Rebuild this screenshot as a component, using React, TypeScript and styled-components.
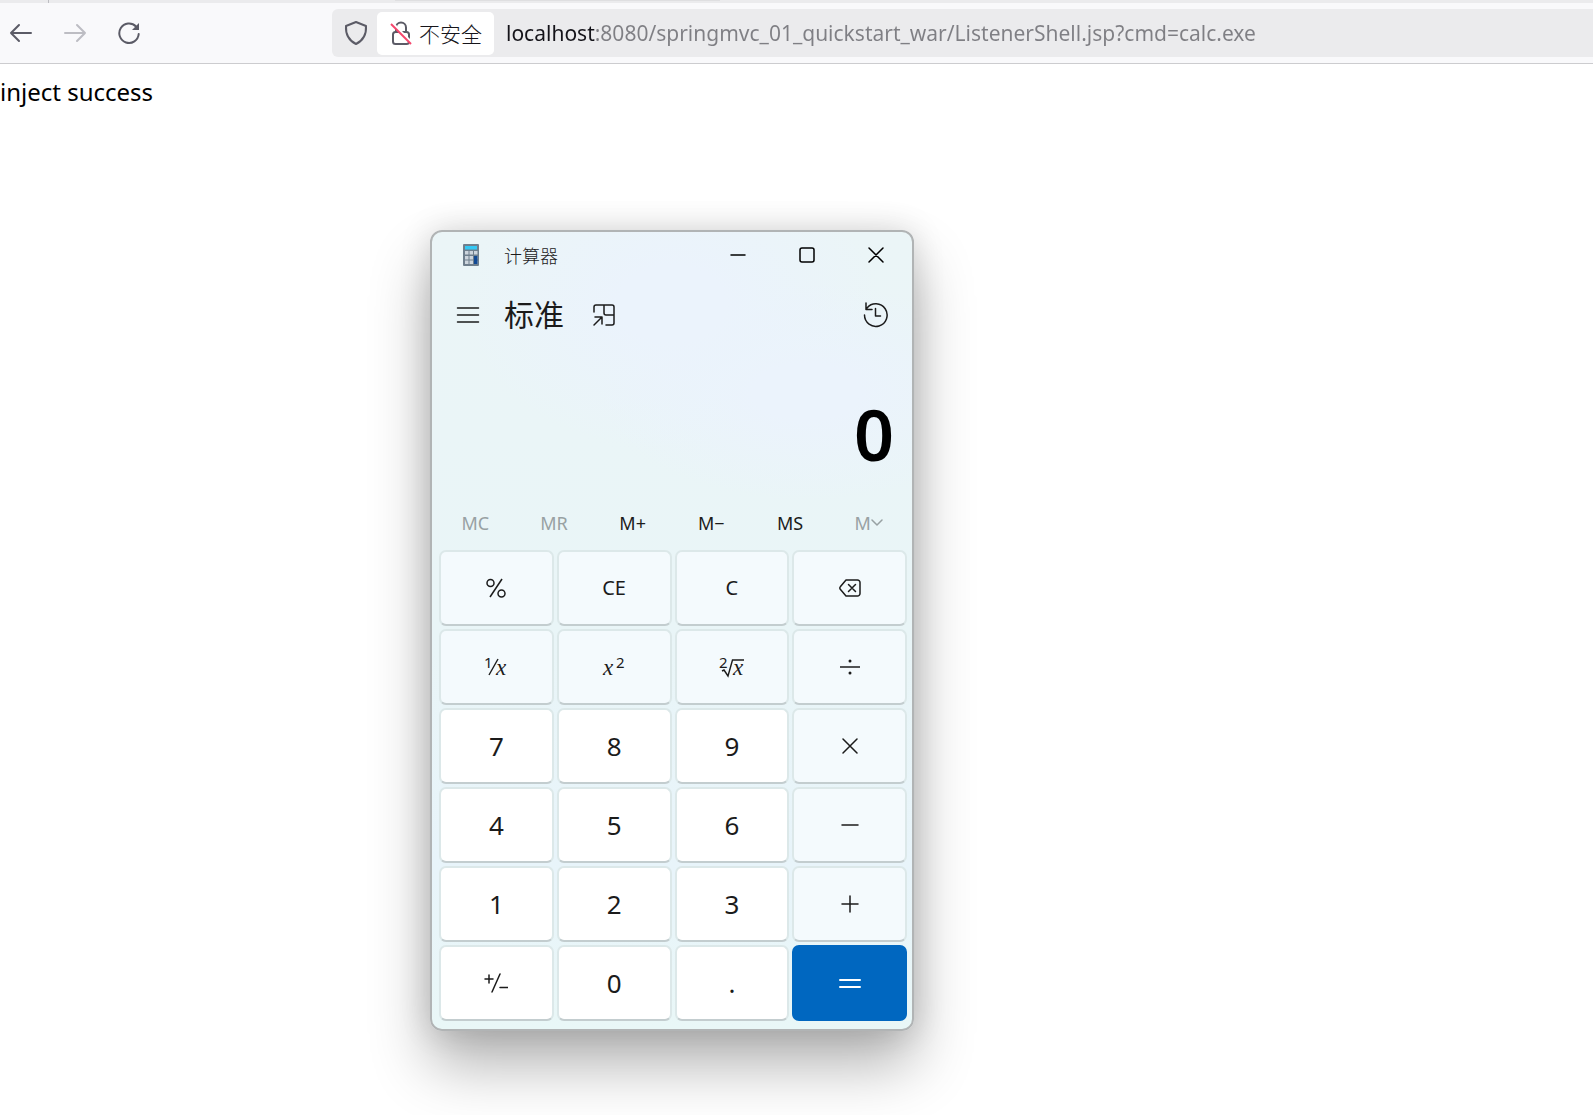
import React from "react";
import styled, { createGlobalStyle, css } from "styled-components";

const ui = `"Noto Sans", "Open Sans", "Noto Sans CJK SC", sans-serif`;
const math = `"Liberation Serif", serif`;

const GlobalStyle = createGlobalStyle`
  * { box-sizing: border-box; }
  body { margin: 0; background: #fff; color: #000; font-family: ${ui}; overflow: hidden; }
  button, input { font: inherit; color: inherit; }
  button { padding: 0; border: 0; background: transparent; cursor: default; }
`;

const Desktop = styled.div`
  position: relative;
  min-height: 100vh;
  overflow: hidden;
`;

const TabStrip = styled.div`
  display: flex;
  height: 3px;
  background: #ebebed;
`;

const TabEdge = styled.div`
  width: 49px;
  border-right: 1px solid #bdbdc2;
`;

const ActiveTabShade = styled.div`
  width: 325px;
  height: 1px;
  margin-left: 346px;
  background: #dfdfe1;
`;

const Toolbar = styled.header`
  display: flex;
  align-items: center;
  height: 61px;
  padding-left: 8px;
  background: #f9f9fb;
  border-bottom: 1px solid #cccccf;
`;

const NavGroup = styled.nav`
  display: flex;
  gap: 28px;
  width: 324px;
`;

const NavButton = styled.button`
  display: grid;
  place-items: center;
  width: 26px;
  height: 26px;
  color: #5b5b66;
  &:disabled { color: #bdbdc3; }
`;

const AddressBar = styled.div`
  display: flex;
  align-items: center;
  flex: 1;
  height: 48px;
  padding-left: 11px;
  border-radius: 6px 0 0 6px;
  background: #ebebed;
  color: #5b5b66;
`;

const Identity = styled.button`
  display: flex;
  align-items: center;
  gap: 7px;
  height: 43px;
  margin: 0 12px 0 8px;
  padding: 0 12px 0 13px;
  border-radius: 5px;
  background: #fff;
`;

const IdentityText = styled.span`
  color: #15141a;
  font-family: "Noto Sans CJK SC", sans-serif;
  font-size: 21px;
  font-weight: 300;
  line-height: 28px;
`;

const Url = styled.input`
  flex: 1;
  min-width: 0;
  height: 36px;
  padding: 0;
  border: 0;
  outline: 0;
  color: #7f7f84;
  font-family: "Noto Sans", sans-serif;
  font-size: 21px;
  background: linear-gradient(90deg, #15141a 89px, #7f7f84 89px);
  background-clip: text;
  -webkit-background-clip: text;
  -webkit-text-fill-color: transparent;
`;

const Page = styled.main`
  padding-top: 10px;
  font-size: 24px;
  line-height: 36px;
`;

const PageText = styled.p`
  margin: 0;
`;

const CalcWindow = styled.section`
  position: absolute;
  left: 430px;
  top: 230px;
  width: 484px;
  border: 2px solid #b1b4b5;
  border-radius: 12px;
  color: #1b1b1b;
  background:
    radial-gradient(ellipse 210px 150px at 50% 9%, #ebf3fc 0 25%, rgba(235, 243, 252, 0) 100%),
    radial-gradient(ellipse 210px 110px at 78% 20%, #ebf3fc 0 25%, rgba(235, 243, 252, 0) 100%),
    linear-gradient(180deg, #ebf5f7 0, #e9f5f7 50%, #e8f4fa 80%, #e9f7f7 100%);
  box-shadow: 0 34px 60px rgba(0, 0, 0, 0.3), 0 0 32px rgba(0, 0, 0, 0.14);
`;

const TitleBar = styled.div`
  display: flex;
  align-items: center;
  height: 46px;
  padding: 0 2px 0 31px;
`;

const Title = styled.h1`
  flex: 1;
  margin: 0 0 0 25px;
  font-family: "Noto Sans CJK SC", sans-serif;
  font-size: 18px;
  font-weight: 300;
  line-height: 26px;
`;

const Caption = styled.button`
  display: grid;
  place-items: center;
  width: 69px;
  height: 46px;
  color: #000;
`;

const ModeBar = styled.div`
  display: flex;
  align-items: center;
  height: 74px;
  padding: 0 23px 0 23px;
`;

const IconButton = styled.button`
  display: grid;
  place-items: center;
  width: 26px;
  height: 26px;
`;

const Mode = styled.h2`
  margin: 0 27px 0 23px;
  padding-bottom: 4px;
  font-family: "Noto Sans CJK SC", sans-serif;
  font-size: 30px;
  font-weight: 400;
  line-height: 40px;
`;

const Spacer = styled.div`
  flex: 1;
`;

const Display = styled.output`
  display: block;
  height: 146px;
  padding: 34px 18px 0 0;
  color: #000;
  font-size: 70px;
  font-weight: 600;
  line-height: 96px;
  text-align: right;
`;

const MemoryRow = styled.div`
  display: grid;
  grid-template-columns: repeat(6, 1fr);
  height: 52px;
  padding: 0 4px;
`;

const MemoryButton = styled.button`
  display: flex;
  align-items: center;
  justify-content: center;
  height: 50px;
  font-size: 18px;
  line-height: 26px;
  &:disabled { color: #98a1a3; }
`;

const Keypad = styled.div`
  display: grid;
  grid-template-columns: repeat(4, 1fr);
  grid-auto-rows: 76px;
  gap: 3px;
  padding: 0 5px 8px 7px;
`;

type Kind = "function" | "digit" | "equals";

const Key = styled.button<{ $kind: Kind }>`
  display: grid;
  place-items: center;
  border: 2px solid #dce8e9;
  border-bottom-color: #c3cdcf;
  border-radius: 7px;
  background: #f4fafd;
  font-size: 20px;
  line-height: 28px;
  ${(p) => p.$kind === "digit" && css`
    background: #fff;
    font-size: 26px;
    line-height: 36px;
  `}
  ${(p) => p.$kind === "equals" && css`
    background: #0067c0;
    border-color: #0067c0;
    color: #fff;
  `}
`;

const Line = ({ w, h, d, sw = 1.5, label }: { w: number; h: number; d: string; sw?: number; label?: string }) => (
  <svg width={w} height={h} viewBox={`0 0 ${w} ${h}`} fill="none" stroke="currentColor" strokeWidth={sw}
    strokeLinecap="round" strokeLinejoin="round" aria-label={label} aria-hidden={label ? undefined : true}>
    <path d={d} />
  </svg>
);

const MathText = styled.text<{ $serif?: boolean }>`
  font-family: ${(p) => (p.$serif ? math : ui)};
  font-style: ${(p) => (p.$serif ? "italic" : "normal")};
  font-size: ${(p) => (p.$serif ? 23 : 15)}px;
  fill: currentColor;
`;

const Reciprocal = () => (
  <svg width="28" height="36" viewBox="-2 -6 28 36" aria-hidden>
    <MathText x="0" y="13">1</MathText>
    <path d="M5 20L14 4" stroke="currentColor" strokeWidth="1.400" />
    <MathText $serif x="12" y="20">x</MathText>
  </svg>
);

const Square = () => (
  <svg width="28" height="36" viewBox="-2 -6 28 36" aria-hidden>
    <MathText $serif x="1" y="20">x</MathText>
    <MathText x="14" y="13">2</MathText>
  </svg>
);

const Root = () => (
  <svg width="30" height="36" viewBox="-2 -6 30 36" aria-hidden>
    <MathText x="0" y="13">2</MathText>
    <path d="M3 16l2-1 4 6 4.500-16H25" fill="none" stroke="currentColor" strokeWidth="1.400" />
    <MathText $serif x="14" y="20">x</MathText>
  </svg>
);

const Percent = () => (
  <svg width="20" height="20" viewBox="0 0 20 20" fill="none" stroke="currentColor" strokeWidth="1.500" aria-hidden>
    <circle cx="4.500" cy="5" r="3.500" />
    <circle cx="15.500" cy="15.500" r="3.500" />
    <path d="M16 1L4 19" />
  </svg>
);

const Divide = () => (
  <svg width="22" height="18" viewBox="0 0 22 18" aria-hidden>
    <path d="M1 9h20" stroke="currentColor" strokeWidth="1.500" />
    <circle cx="11" cy="3" r="1.500" fill="currentColor" />
    <circle cx="11" cy="15" r="1.500" fill="currentColor" />
  </svg>
);

const AppIcon = () => (
  <svg width="16" height="22" viewBox="0 0 16 22" aria-hidden>
    <rect width="16" height="22" rx="1" fill="#6f7f8d" />
    <rect x="2" y="2" width="12" height="3.500" fill="#34c8f4" />
    {[7, 12, 16.5].map((y) => [2, 6.5, 11].map((x) => (
      <rect key={`${x}-${y}`} x={x} y={y} width="3.500" height="3.500" fill="#cdd5dd" />
    )))}
    <rect x="11" y="12" width="3.500" height="8" fill="#124a94" />
  </svg>
);

const InsecureLock = () => (
  <svg width="22" height="26" viewBox="0 0 22 26" fill="none" strokeWidth="2" aria-hidden>
    <rect x="3" y="12" width="16" height="12" rx="2.500" stroke="#5b5b66" />
    <path d="M6 12V7.500a5 5 0 0 1 10 0V12" stroke="#5b5b66" />
    <path d="M2 3l20 20" stroke="#fff" strokeWidth="3" />
    <path d="M1 4l20 20" stroke="#f5476d" />
  </svg>
);

const Reload = () => (
  <svg width="24" height="24" viewBox="0 0 24 24" fill="none" stroke="currentColor" strokeWidth="2" aria-hidden>
    <path d="M19 5.500A9.700 9.700 0 1 0 21.700 13" strokeLinecap="round" />
    <path d="M22 2v7h-7z" fill="currentColor" stroke="none" />
  </svg>
);

const memory = [
  { label: "MC", off: true }, { label: "MR", off: true }, { label: "M+" },
  { label: "M−" }, { label: "MS" }, { label: "M", off: true, menu: true },
];

const keys: { name: string; kind?: Kind; face?: React.ReactNode }[] = [
  { name: "percent", face: <Percent /> },
  { name: "CE" },
  { name: "C" },
  { name: "backspace", face: <Line w={22} h={18} d="M7 1h11.500a2.500 2.500 0 0 1 2.500 2.500v11a2.500 2.500 0 0 1-2.500 2.500H7L1.500 10.500a2 2 0 0 1 0-3zM9.500 5.500l7 7M16.500 5.500l-7 7" /> },
  { name: "reciprocal", face: <Reciprocal /> },
  { name: "square", face: <Square /> },
  { name: "square root", face: <Root /> },
  { name: "divide", face: <Divide /> },
  { name: "7", kind: "digit" },
  { name: "8", kind: "digit" },
  { name: "9", kind: "digit" },
  { name: "multiply", face: <Line w={16} h={16} d="M1 1l14 14M15 1L1 15" /> },
  { name: "4", kind: "digit" },
  { name: "5", kind: "digit" },
  { name: "6", kind: "digit" },
  { name: "subtract", face: <Line w={18} h={18} d="M1 9h16" /> },
  { name: "1", kind: "digit" },
  { name: "2", kind: "digit" },
  { name: "3", kind: "digit" },
  { name: "add", face: <Line w={18} h={18} d="M1 9h16M9 1v16" /> },
  { name: "negate", kind: "digit", face: <Line w={24} h={20} d="M1 6h8M5 2v8M8 19L16 1M16 14.500h8" /> },
  { name: "0", kind: "digit" },
  { name: ".", kind: "digit" },
  { name: "equals", kind: "equals", face: <Line w={22} h={12} sw={2} d="M1 3h20M1 10h20" /> },
];

export default function App() {
  return (
    <>
      <GlobalStyle />
      <Desktop>
        <TabStrip><TabEdge /><ActiveTabShade /></TabStrip>
        <Toolbar>
          <NavGroup aria-label="Navigation">
            <NavButton aria-label="Back"><Line w={24} h={20} sw={2} d="M22 10H2M10 2L2 10l8 8" /></NavButton>
            <NavButton aria-label="Forward" disabled><Line w={24} h={20} sw={2} d="M2 10h20M14 2l8 8-8 8" /></NavButton>
            <NavButton aria-label="Reload"><Reload /></NavButton>
          </NavGroup>
          <AddressBar>
            <Line w={26} h={26} sw={2} label="Tracking protection" d="M13 2l10 4c.5 8-2 14-10 18C5 20 2.500 14 3 6z" />
            <Identity>
              <InsecureLock />
              <IdentityText>不安全</IdentityText>
            </Identity>
            <Url aria-label="Address" defaultValue="localhost:8080/springmvc_01_quickstart_war/ListenerShell.jsp?cmd=calc.exe" />
          </AddressBar>
        </Toolbar>
        <Page><PageText>inject success</PageText></Page>

        <CalcWindow aria-label="计算器">
          <TitleBar>
            <AppIcon />
            <Title>计算器</Title>
            <Caption aria-label="Minimize"><Line w={16} h={16} d="M1 8h14" /></Caption>
            <Caption aria-label="Maximize"><Line w={16} h={16} d="M3 1h10a2 2 0 0 1 2 2v10a2 2 0 0 1-2 2H3a2 2 0 0 1-2-2V3a2 2 0 0 1 2-2z" /></Caption>
            <Caption aria-label="Close"><Line w={16} h={16} d="M1 1l14 14M15 1L1 15" /></Caption>
          </TitleBar>
          <ModeBar>
            <IconButton aria-label="Menu"><Line w={24} h={18} d="M1.500 2h21M1.500 9h21M1.500 16h21" /></IconButton>
            <Mode>标准</Mode>
            <IconButton aria-label="Keep on top">
              <Line w={24} h={24} d="M2 9V4a2 2 0 0 1 2-2h16a2 2 0 0 1 2 2v16a2 2 0 0 1-2 2h-6M12 2v8a2 2 0 0 0 2 2h8M2 22l8-8M3 14h7v7" />
            </IconButton>
            <Spacer />
            <IconButton aria-label="History">
              <Line w={26} h={26} d="M1.500 13A11.300 11.300 0 1 0 4 6M3 1v6.500h6M12.500 6.500v7.500h5" />
            </IconButton>
          </ModeBar>
          <Display>0</Display>
          <MemoryRow>
            {memory.map((m) => (
              <MemoryButton key={m.label} disabled={m.off}>
                {m.label}
                {m.menu && <Line w={12} h={8} d="M1 1l5 5 5-5" />}
              </MemoryButton>
            ))}
          </MemoryRow>
          <Keypad>
            {keys.map((k) => (
              <Key key={k.name} $kind={k.kind ?? "function"} aria-label={k.name}>{k.face ?? k.name}</Key>
            ))}
          </Keypad>
        </CalcWindow>
      </Desktop>
    </>
  );
}
